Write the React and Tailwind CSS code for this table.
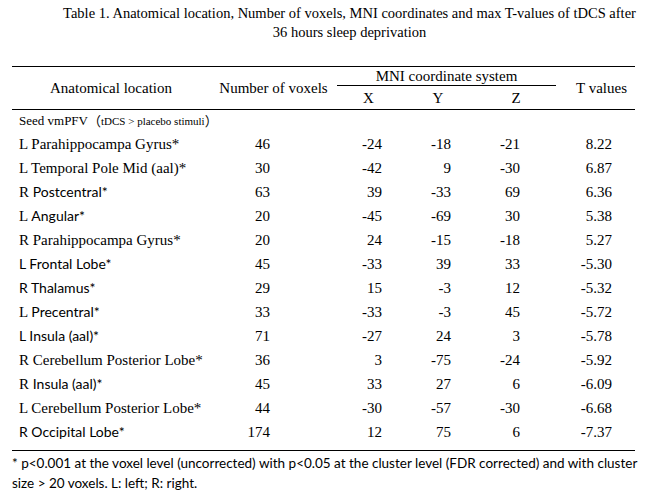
import React from "react";

const SERIF = "font-['Liberation_Serif','Times_New_Roman',serif]";
const SANS = "font-['Lato','Open_Sans',sans-serif]";

// each name is a list of [text, font] parts, since the source mixes fonts
const ROWS = [
  { name: [["L Parahippocampa Gyrus*", "s"]], n: "46", x: "-24", y: "-18", z: "-21", t: "8.22" },
  { name: [["L Temporal Pole Mid (aal)*", "s"]], n: "30", x: "-42", y: "9", z: "-30", t: "6.87" },
  { name: [["R ", "s"], ["Postcentral*", "a"]], n: "63", x: "39", y: "-33", z: "69", t: "6.36" },
  { name: [["L ", "s"], ["Angular*", "a"]], n: "20", x: "-45", y: "-69", z: "30", t: "5.38" },
  { name: [["R Parahippocampa Gyrus*", "s"]], n: "20", x: "24", y: "-15", z: "-18", t: "5.27" },
  { name: [["L Frontal Lobe*", "a"]], n: "45", x: "-33", y: "39", z: "33", t: "-5.30" },
  { name: [["R Thalamus*", "a"]], n: "29", x: "15", y: "-3", z: "12", t: "-5.32" },
  { name: [["L ", "s"], ["Precentral*", "a"]], n: "33", x: "-33", y: "-3", z: "45", t: "-5.72" },
  { name: [["L Insula (aal)*", "a"]], n: "71", x: "-27", y: "24", z: "3", t: "-5.78" },
  { name: [["R Cerebellum Posterior Lobe*", "s"]], n: "36", x: "3", y: "-75", z: "-24", t: "-5.92" },
  { name: [["R ", "s"], ["Insula (aal)*", "a"]], n: "45", x: "33", y: "27", z: "6", t: "-6.09" },
  { name: [["L Cerebellum Posterior Lobe*", "s"]], n: "44", x: "-30", y: "-57", z: "-30", t: "-6.68" },
  { name: [["R Occipital Lobe*", "a"]], n: "174", x: "12", y: "75", z: "6", t: "-7.37" },
];

const NamePart = ({ text, font }) =>
  font === "s" ? (
    <span className={`${SERIF} text-[15px]`}>{text}</span>
  ) : (
    <span className={`${SANS} text-[14px]`}>{text}</span>
  );

const DataRow = ({ row }) => (
  <div className={`flex h-[24px] items-center leading-[24px] text-[15px] ${SERIF}`}>
    <div className="w-[198px] pl-[7px] whitespace-nowrap">
      {row.name.map(([text, font], i) => (
        <NamePart key={i} text={text} font={font} />
      ))}
    </div>
    <div className="w-[60px] text-right">{row.n}</div>
    <div className="w-[112px] text-right">{row.x}</div>
    <div className="w-[69px] text-right">{row.y}</div>
    <div className="w-[69px] text-right">{row.z}</div>
    <div className="w-[92px] text-right">{row.t}</div>
  </div>
);

export default function App() {
  return (
    <div className="w-[667px] h-[502px] bg-white text-black overflow-hidden">
      <div className={`${SERIF} pl-[32px] pt-[4px] text-center text-[14.5px] leading-[19px]`}>
        <div className="whitespace-nowrap">
          Table 1. Anatomical location, Number of voxels, MNI coordinates and max T-values of tDCS after
        </div>
        <div>36 hours sleep deprivation</div>
      </div>

      <div className="ml-[12px] mt-[24px] w-[623px]">
        {/* header */}
        <div className={`flex h-[44px] border-y border-black text-[15px] ${SERIF}`}>
          <div className="w-[198px] flex items-center justify-center">Anatomical location</div>
          <div className="w-[127px] flex items-center justify-center">Number of voxels</div>
          <div className="w-[219px] flex flex-col">
            <div className="h-[19px] leading-[19px] text-center border-b border-black">
              MNI coordinate system
            </div>
            <div className="flex flex-1 items-center leading-[20px]">
              <div className="w-[63px] text-center">X</div>
              <div className="w-[76px] text-center">Y</div>
              <div className="w-[80px] text-center">Z</div>
            </div>
          </div>
          <div className="flex-1 pl-[12px] flex items-center justify-center">T values</div>
        </div>

        {/* body */}
        <div className="border-b border-black pb-[6px]">
          <div className={`h-[22px] pl-[7px] flex items-center ${SERIF} whitespace-nowrap`}>
            <span className="text-[13px]">Seed vmPFV</span>
            <span className="text-[13px] font-['Noto_Sans_CJK_SC',sans-serif]">（</span>
            <span className="text-[11px]">tDCS &gt; placebo stimuli</span>
            <span className="text-[13px] font-['Noto_Sans_CJK_SC',sans-serif]">）</span>
          </div>
          {ROWS.map((row, i) => (
            <DataRow key={i} row={row} />
          ))}
        </div>

        <div className={`${SANS} mt-[2px] text-[13.5px] leading-[20px]`}>
          <div className="whitespace-nowrap">
            * p&lt;0.001 at the voxel level (uncorrected) with p&lt;0.05 at the cluster level (FDR corrected) and with cluster
          </div>
          <div>size &gt; 20 voxels. L: left; R: right.</div>
        </div>
      </div>
    </div>
  );
}
